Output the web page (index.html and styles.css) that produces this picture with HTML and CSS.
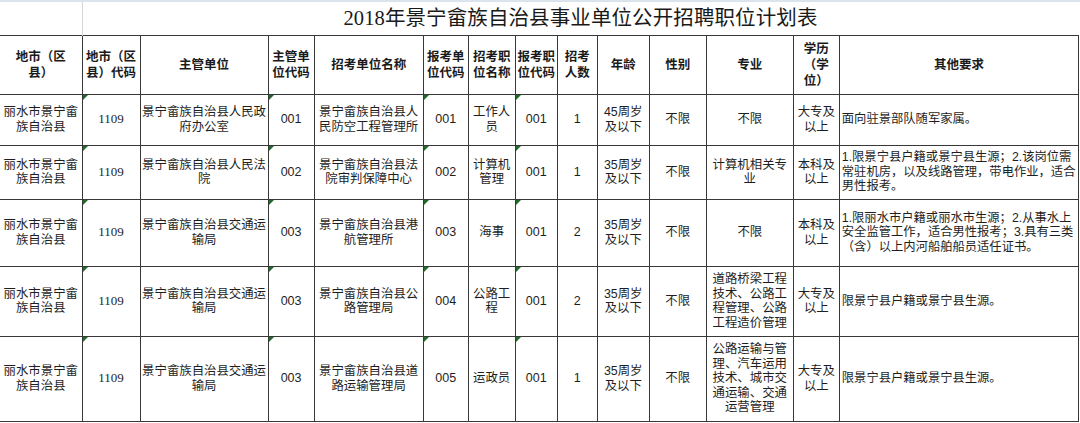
FILE: index.html
```html
<!DOCTYPE html>
<html lang="zh-CN">
<head>
<meta charset="utf-8">
<title>2018年景宁畲族自治县事业单位公开招聘职位计划表</title>
<link rel="stylesheet" href="styles.css">
</head>
<body>
<div class="sheet-band"></div>
<table class="plan">
  <colgroup>
    <col class="c0"><col class="c1"><col class="c2"><col class="c3"><col class="c4"><col class="c5"><col class="c6"><col class="c7"><col class="c8"><col class="c9"><col class="c10"><col class="c11"><col class="c12"><col class="c13">
  </colgroup>
  <tr class="row-title">
    <td class="title-blank"></td>
    <td class="title" colspan="13">2018年景宁畲族自治县事业单位公开招聘职位计划表</td>
  </tr>
  <tr class="row-head">
    <th class="cell">地市（区<br>县）</th>
    <th class="cell">地市（区<br>县）代码</th>
    <th class="cell">主管单位</th>
    <th class="cell">主管单<br>位代码</th>
    <th class="cell">招考单位名称</th>
    <th class="cell">报考单<br>位代码</th>
    <th class="cell">招考职<br>位名称</th>
    <th class="cell">报考职<br>位代码</th>
    <th class="cell">招考<br>人数</th>
    <th class="cell">年龄</th>
    <th class="cell">性别</th>
    <th class="cell">专业</th>
    <th class="cell">学历<br>（学<br>位）</th>
    <th class="cell">其他要求</th>
  </tr>
  <tr class="r1">
    <td class="cell">丽水市景宁畲族自治县</td>
    <td class="cell tri code">1109</td>
    <td class="cell">景宁畲族自治县人民政府办公室</td>
    <td class="cell tri num">001</td>
    <td class="cell">景宁畲族自治县人民防空工程管理所</td>
    <td class="cell tri num">001</td>
    <td class="cell">工作人员</td>
    <td class="cell tri num">001</td>
    <td class="cell num">1</td>
    <td class="cell">45周岁及以下</td>
    <td class="cell">不限</td>
    <td class="cell">不限</td>
    <td class="cell">大专及以上</td>
    <td class="cell req">面向驻景部队随军家属。</td>
  </tr>
  <tr class="r2">
    <td class="cell">丽水市景宁畲族自治县</td>
    <td class="cell tri code">1109</td>
    <td class="cell">景宁畲族自治县人民法院</td>
    <td class="cell tri num">002</td>
    <td class="cell">景宁畲族自治县法院审判保障中心</td>
    <td class="cell tri num">002</td>
    <td class="cell">计算机管理</td>
    <td class="cell tri num">001</td>
    <td class="cell num">1</td>
    <td class="cell">35周岁及以下</td>
    <td class="cell">不限</td>
    <td class="cell">计算机相关专业</td>
    <td class="cell">本科及以上</td>
    <td class="cell req">1.限景宁县户籍或景宁县生源；2.该岗位需常驻机房，以及线路管理，带电作业，适合男性报考。</td>
  </tr>
  <tr class="r3">
    <td class="cell">丽水市景宁畲族自治县</td>
    <td class="cell tri code">1109</td>
    <td class="cell">景宁畲族自治县交通运输局</td>
    <td class="cell tri num">003</td>
    <td class="cell">景宁畲族自治县港航管理所</td>
    <td class="cell tri num">003</td>
    <td class="cell">海事</td>
    <td class="cell tri num">001</td>
    <td class="cell num">2</td>
    <td class="cell">35周岁及以下</td>
    <td class="cell">不限</td>
    <td class="cell">不限</td>
    <td class="cell">本科及以上</td>
    <td class="cell req">1.限丽水市户籍或丽水市生源；2.从事水上安全监管工作，适合男性报考；3.具有三类（含）以上内河船舶船员适任证书。</td>
  </tr>
  <tr class="r4">
    <td class="cell">丽水市景宁畲族自治县</td>
    <td class="cell tri code">1109</td>
    <td class="cell">景宁畲族自治县交通运输局</td>
    <td class="cell tri num">003</td>
    <td class="cell">景宁畲族自治县公路管理局</td>
    <td class="cell tri num">004</td>
    <td class="cell">公路工程</td>
    <td class="cell tri num">001</td>
    <td class="cell num">2</td>
    <td class="cell">35周岁及以下</td>
    <td class="cell">不限</td>
    <td class="cell">道路桥梁工程技术、公路工程管理、公路工程造价管理</td>
    <td class="cell">大专及以上</td>
    <td class="cell req">限景宁县户籍或景宁县生源。</td>
  </tr>
  <tr class="r5">
    <td class="cell">丽水市景宁畲族自治县</td>
    <td class="cell tri code">1109</td>
    <td class="cell">景宁畲族自治县交通运输局</td>
    <td class="cell tri num">003</td>
    <td class="cell">景宁畲族自治县道路运输管理局</td>
    <td class="cell tri num">005</td>
    <td class="cell">运政员</td>
    <td class="cell tri num">001</td>
    <td class="cell num">1</td>
    <td class="cell">35周岁及以下</td>
    <td class="cell">不限</td>
    <td class="cell">公路运输与管理、汽车运用技术、城市交通运输、交通运营管理</td>
    <td class="cell">大专及以上</td>
    <td class="cell req">限景宁县户籍或景宁县生源。</td>
  </tr>
</table>
</body>
</html>
```

FILE: styles.css
```css
html, body {
  margin: 0;
  padding: 0;
  background: #ffffff;
}

body {
  font-family: "Liberation Sans", "Noto Sans CJK SC", sans-serif;
  color: #1e1e1e;
  width: 1080px;
  height: 423px;
  overflow: hidden;
}

.sheet-band {
  height: 2px;
  background: #dbe3ec;
}

.plan {
  border-collapse: collapse;
  table-layout: fixed;
  width: 1079px;
}

.c0 { width: 82px; }
.c1 { width: 58px; }
.c2 { width: 128px; }
.c3 { width: 46px; }
.c4 { width: 109px; }
.c5 { width: 45px; }
.c6 { width: 47px; }
.c7 { width: 42px; }
.c8 { width: 40px; }
.c9 { width: 52px; }
.c10 { width: 57px; }
.c11 { width: 87px; }
.c12 { width: 46px; }
.c13 { width: 239px; }

.row-title { height: 33px; }
.row-head { height: 59px; }
.r1 { height: 51px; }
.r2 { height: 54px; }
.r3 { height: 67px; }
.r4 { height: 70px; }
.r5 { height: 85px; }

.plan .title-blank {
  border-right: 1px solid #d6d6d6;
  padding: 0;
}

.plan .title {
  text-align: center;
  font-family: "Liberation Serif", "Noto Sans CJK SC", serif;
  font-size: 20.5px;
  line-height: 24px;
  color: #1a1a1a;
  padding: 0 0 1px 0;
  letter-spacing: 0.1px;
}

.plan .cell {
  border: 1px solid #383838;
  text-align: center;
  vertical-align: middle;
  padding: 0 1px;
  font-size: 12.4px;
  line-height: 14.5px;
}

.plan .cell:first-child {
  border-left: none;
}

.plan th.cell {
  font-weight: 700;
  font-size: 12.5px;
  line-height: 16px;
  color: #1a1a1a;
}

.plan .code {
  font-family: "Liberation Serif", "Noto Sans CJK SC", serif;
  font-size: 13px;
}

.plan .num {
  font-size: 12.5px;
}

.plan .req {
  text-align: left;
  padding: 0 0 0 2px;
  font-size: 12.3px;
}

.tri {
  position: relative;
}

.tri::before {
  content: "";
  position: absolute;
  left: 0;
  top: 0;
  width: 0;
  height: 0;
  border-top: 5px solid #1f6b2a;
  border-right: 5px solid transparent;
}
```
